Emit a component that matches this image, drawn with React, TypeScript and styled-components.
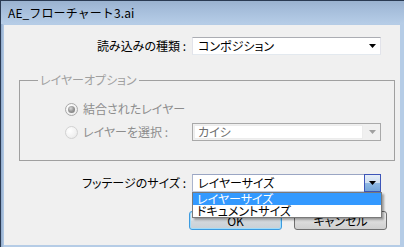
import React from "react";
import styled, { createGlobalStyle, css } from "styled-components";

const GlobalStyle = createGlobalStyle`
  html, body { margin: 0; padding: 0; }
  body {
    width: 404px; height: 247px; overflow: hidden; background: #f0f0f0;
    font-family: "Noto Sans CJK JP", "Noto Sans", sans-serif;
    font-size: 12px; color: #000;
  }
  * { box-sizing: border-box; }
`;

const Window = styled.div`
  width: 404px;
  height: 247px;
  display: flex;
  flex-direction: column;
  border-top: 1px solid #2a3a52;
  border-left: 1px solid #2a3a52;
  background: #b9d1ea;
  overflow: hidden;
`;

const TitleBar = styled.div`
  flex: none;
  height: 23px;
  display: flex;
  align-items: center;
  padding-left: 7px;
  background: linear-gradient(#9ab2cf 0%, #a6bedb 40%, #b6cde7 100%);
  font-size: 12px;
  line-height: 14px;
  letter-spacing: 0.1px;
`;

const Frame = styled.div`
  flex: 1;
  display: flex;
  padding: 1px 4px 2px 3px;
  background: linear-gradient(90deg, #8fa9ca 0px, #b5cce6 3px);
`;

const Body = styled.div`
  flex: 1;
  display: flex;
  flex-direction: column;
  padding-top: 12px;
  background: #f0f0f0;
`;

const FieldRow = styled.div<{ $top?: number }>`
  display: grid;
  grid-template-columns: 188px 189px;
  align-items: center;
  margin-top: ${(p) => p.$top ?? 0}px;
`;

const Label = styled.div`
  text-align: right;
  padding-right: 6px;
  line-height: 14px;
  white-space: nowrap;
  font-feature-settings: "palt";
`;

const ComboWrap = styled.div`
  position: relative;
  width: 189px;
  height: 18px;
`;

const Combo = styled.div<{ $disabled?: boolean; $open?: boolean }>`
  width: 100%;
  height: 18px;
  display: flex;
  background: #fff;
  border: 1px solid;
  border-color: #abadb3 #e2e3ea #e3e9ef #e2e3ea;
  ${(p) =>
    p.$disabled &&
    css`
      background: #f0f0f0;
      border-color: #a9a9a9;
    `}
  ${(p) =>
    p.$open &&
    css`
      border-color: #9aa6c4 #7d8fc4 #c2cbe0 #aab4cc;
    `}
`;

const ComboText = styled.div<{ $disabled?: boolean }>`
  flex: 1;
  display: flex;
  align-items: center;
  padding-left: 5px;
  line-height: 14px;
  white-space: nowrap;
  font-feature-settings: "palt";
  color: ${(p) => (p.$disabled ? "#6d6d6d" : "#000")};
  ${(p) =>
    p.$disabled &&
    css`
      background: #fff;
      border: 1px solid #ececec;
      margin: 1px 1px 1px 1px;
      padding-left: 3px;
    `}
`;

const ComboButton = styled.div<{ $open?: boolean }>`
  flex: none;
  width: 16px;
  display: flex;
  align-items: center;
  justify-content: center;
  ${(p) =>
    p.$open &&
    css`
      margin: -1px -1px -1px 0;
      width: 17px;
      border: 1px solid #3d55b8;
      background: linear-gradient(#e6eef8 0%, #cfdff1 48%, #8fb8e2 52%, #74a6da 100%);
    `}
`;

const Arrow = ({ color }: { color: string }) => (
  <svg width="7" height="4" viewBox="0 0 7 4">
    <polygon points="0,0 7,0 3.5,4" fill={color} />
  </svg>
);

const DropList = styled.div`
  position: absolute;
  top: 100%;
  left: 0;
  width: 190px;
  z-index: 5;
  background: #fff;
  border: 1px solid #7a7a7a;
  box-shadow: 2px 2px 2px rgba(0, 0, 0, 0.35);
`;

const DropItem = styled.div<{ $selected?: boolean }>`
  height: 12px;
  line-height: 12px;
  padding-left: 4px;
  white-space: nowrap;
  font-feature-settings: "palt";
  background: ${(p) => (p.$selected ? "#3399ff" : "#fff")};
  color: ${(p) => (p.$selected ? "#fff" : "#000")};
`;

const GroupBox = styled.fieldset`
  margin: 18px 5px 0 15px;
  padding: 0 0 19px 0;
  border: 1px solid #a0a0a0;
  min-width: 0;
`;

const Legend = styled.legend`
  margin-left: 18px;
  padding: 0 2px;
  line-height: 14px;
  color: #a0a0a0;
  font-feature-settings: "palt";
`;

const RadioRow = styled.div<{ $top: number }>`
  display: grid;
  grid-template-columns: 172px 189px;
  align-items: center;
  height: 18px;
  margin-top: ${(p) => p.$top}px;
`;

const RadioItem = styled.label`
  display: flex;
  align-items: center;
  gap: 5px;
  padding-left: 45px;
  color: #8d8d8d;
  line-height: 14px;
  white-space: nowrap;
  font-feature-settings: "palt";
`;

const RadioCircle = styled.span<{ $checked?: boolean }>`
  position: relative;
  flex: none;
  width: 13px;
  height: 13px;
  border-radius: 50%;
  border: 1px solid ${(p) => (p.$checked ? "#a9a9a9" : "#d2d2d2")};
  background: radial-gradient(circle at 35% 35%, #ffffff 0%, #f1f1f1 60%, #e2e2e2 100%);
  ${(p) =>
    p.$checked &&
    css`
      &::after {
        content: "";
        position: absolute;
        left: 2px;
        top: 2px;
        width: 7px;
        height: 7px;
        border-radius: 50%;
        background: radial-gradient(circle at 40% 35%, #d8d8d8 0%, #9a9a9a 45%, #6e6e6e 100%);
      }
    `}
`;

const ButtonRow = styled.div`
  display: flex;
  justify-content: flex-end;
  gap: 12px;
  padding-right: 13px;
  margin-top: 19px;
`;

const Button = styled.button<{ $default?: boolean }>`
  width: 93px;
  height: 19px;
  padding: 0;
  font-family: inherit;
  font-size: 12px;
  line-height: 14px;
  color: #000;
  border-radius: 3px;
  border: 1px solid #707070;
  background: linear-gradient(#f2f2f2 0%, #ebebeb 48%, #dddddd 52%, #cfcfcf 100%);
  font-feature-settings: "palt";
  ${(p) =>
    p.$default &&
    css`
      border-color: #3c9be0;
      box-shadow: inset 0 0 0 1px #9fdcfb;
      background: linear-gradient(#e9edf0 0%, #dfe4e8 48%, #d2d8dd 52%, #c9d0d6 100%);
    `}
`;

export default function App() {
  return (
    <>
      <GlobalStyle />
      <Window>
        <TitleBar>AE_フローチャート3.ai</TitleBar>
        <Frame>
          <Body>
            <FieldRow>
              <Label>読み込みの種類 :</Label>
              <ComboWrap>
                <Combo>
                  <ComboText>コンポジション</ComboText>
                  <ComboButton>
                    <Arrow color="#000" />
                  </ComboButton>
                </Combo>
              </ComboWrap>
            </FieldRow>

            <GroupBox>
              <Legend>レイヤーオプション</Legend>
              <RadioRow $top={13}>
                <RadioItem>
                  <RadioCircle $checked />
                  結合されたレイヤー
                </RadioItem>
              </RadioRow>
              <RadioRow $top={5}>
                <RadioItem>
                  <RadioCircle />
                  レイヤーを選択 :
                </RadioItem>
                <ComboWrap>
                  <Combo $disabled>
                    <ComboText $disabled>カイシ</ComboText>
                    <ComboButton>
                      <Arrow color="#a0a0a0" />
                    </ComboButton>
                  </Combo>
                </ComboWrap>
              </RadioRow>
            </GroupBox>

            <FieldRow $top={13}>
              <Label>フッテージのサイズ :</Label>
              <ComboWrap>
                <Combo $open>
                  <ComboText>レイヤーサイズ</ComboText>
                  <ComboButton $open>
                    <Arrow color="#000" />
                  </ComboButton>
                </Combo>
                <DropList>
                  <DropItem $selected>レイヤーサイズ</DropItem>
                  <DropItem>ドキュメントサイズ</DropItem>
                </DropList>
              </ComboWrap>
            </FieldRow>

            <ButtonRow>
              <Button $default>OK</Button>
              <Button>キャンセル</Button>
            </ButtonRow>
          </Body>
        </Frame>
      </Window>
    </>
  );
}
